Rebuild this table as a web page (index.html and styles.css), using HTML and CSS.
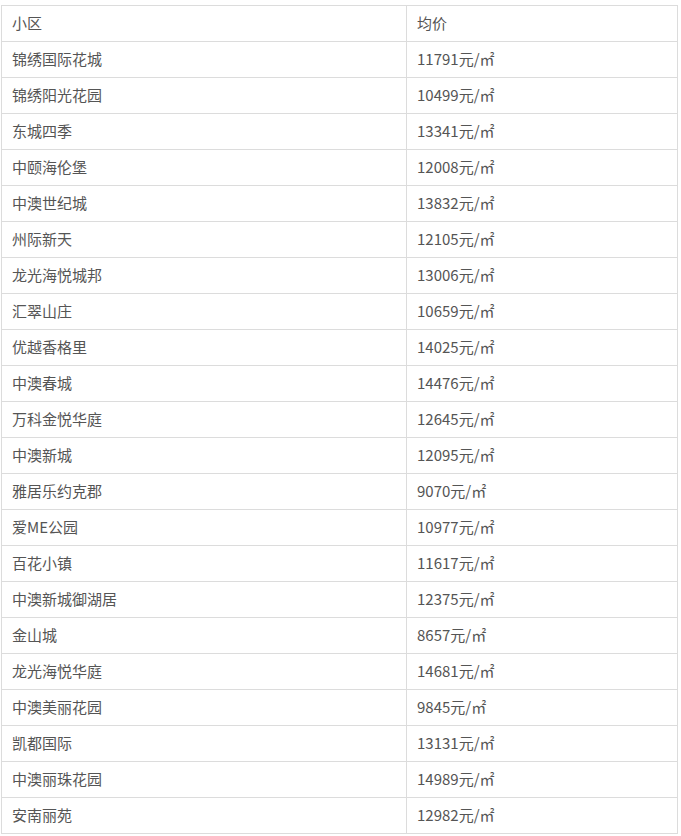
FILE: index.html
```html
<!DOCTYPE html>
<html lang="zh">
<head>
<meta charset="utf-8">
<link rel="stylesheet" href="styles.css">
</head>
<body>
<table class="price-table">
<tbody>
<tr><td class="c1">小区</td><td class="c2">均价</td></tr>
<tr><td>锦绣国际花城</td><td>11791元/㎡</td></tr>
<tr><td>锦绣阳光花园</td><td>10499元/㎡</td></tr>
<tr><td>东城四季</td><td>13341元/㎡</td></tr>
<tr><td>中颐海伦堡</td><td>12008元/㎡</td></tr>
<tr><td>中澳世纪城</td><td>13832元/㎡</td></tr>
<tr><td>州际新天</td><td>12105元/㎡</td></tr>
<tr><td>龙光海悦城邦</td><td>13006元/㎡</td></tr>
<tr><td>汇翠山庄</td><td>10659元/㎡</td></tr>
<tr><td>优越香格里</td><td>14025元/㎡</td></tr>
<tr><td>中澳春城</td><td>14476元/㎡</td></tr>
<tr><td>万科金悦华庭</td><td>12645元/㎡</td></tr>
<tr><td>中澳新城</td><td>12095元/㎡</td></tr>
<tr><td>雅居乐约克郡</td><td>9070元/㎡</td></tr>
<tr><td>爱ME公园</td><td>10977元/㎡</td></tr>
<tr><td>百花小镇</td><td>11617元/㎡</td></tr>
<tr><td>中澳新城御湖居</td><td>12375元/㎡</td></tr>
<tr><td>金山城</td><td>8657元/㎡</td></tr>
<tr><td>龙光海悦华庭</td><td>14681元/㎡</td></tr>
<tr><td>中澳美丽花园</td><td>9845元/㎡</td></tr>
<tr><td>凯都国际</td><td>13131元/㎡</td></tr>
<tr><td>中澳丽珠花园</td><td>14989元/㎡</td></tr>
<tr><td>安南丽苑</td><td>12982元/㎡</td></tr>
</tbody>
</table>
</body>
</html>
```
FILE: styles.css
```css
html, body {
  margin: 0;
  padding: 0;
  background: #fff;
}
body {
  font-family: "Noto Sans CJK SC", "Liberation Sans", sans-serif;
  font-size: 15px;
  color: #555;
}
.price-table {
  margin: 5px 0 0 1px;
  width: 677px;
  border-collapse: collapse;
  table-layout: fixed;
}
.price-table td {
  height: 36px;
  padding: 0 0 2px 10px;
  border: 1px solid #dcdcdc;
  vertical-align: middle;
  line-height: 20px;
  box-sizing: border-box;
}
.price-table td.c1 {
  width: 405px;
}
```
